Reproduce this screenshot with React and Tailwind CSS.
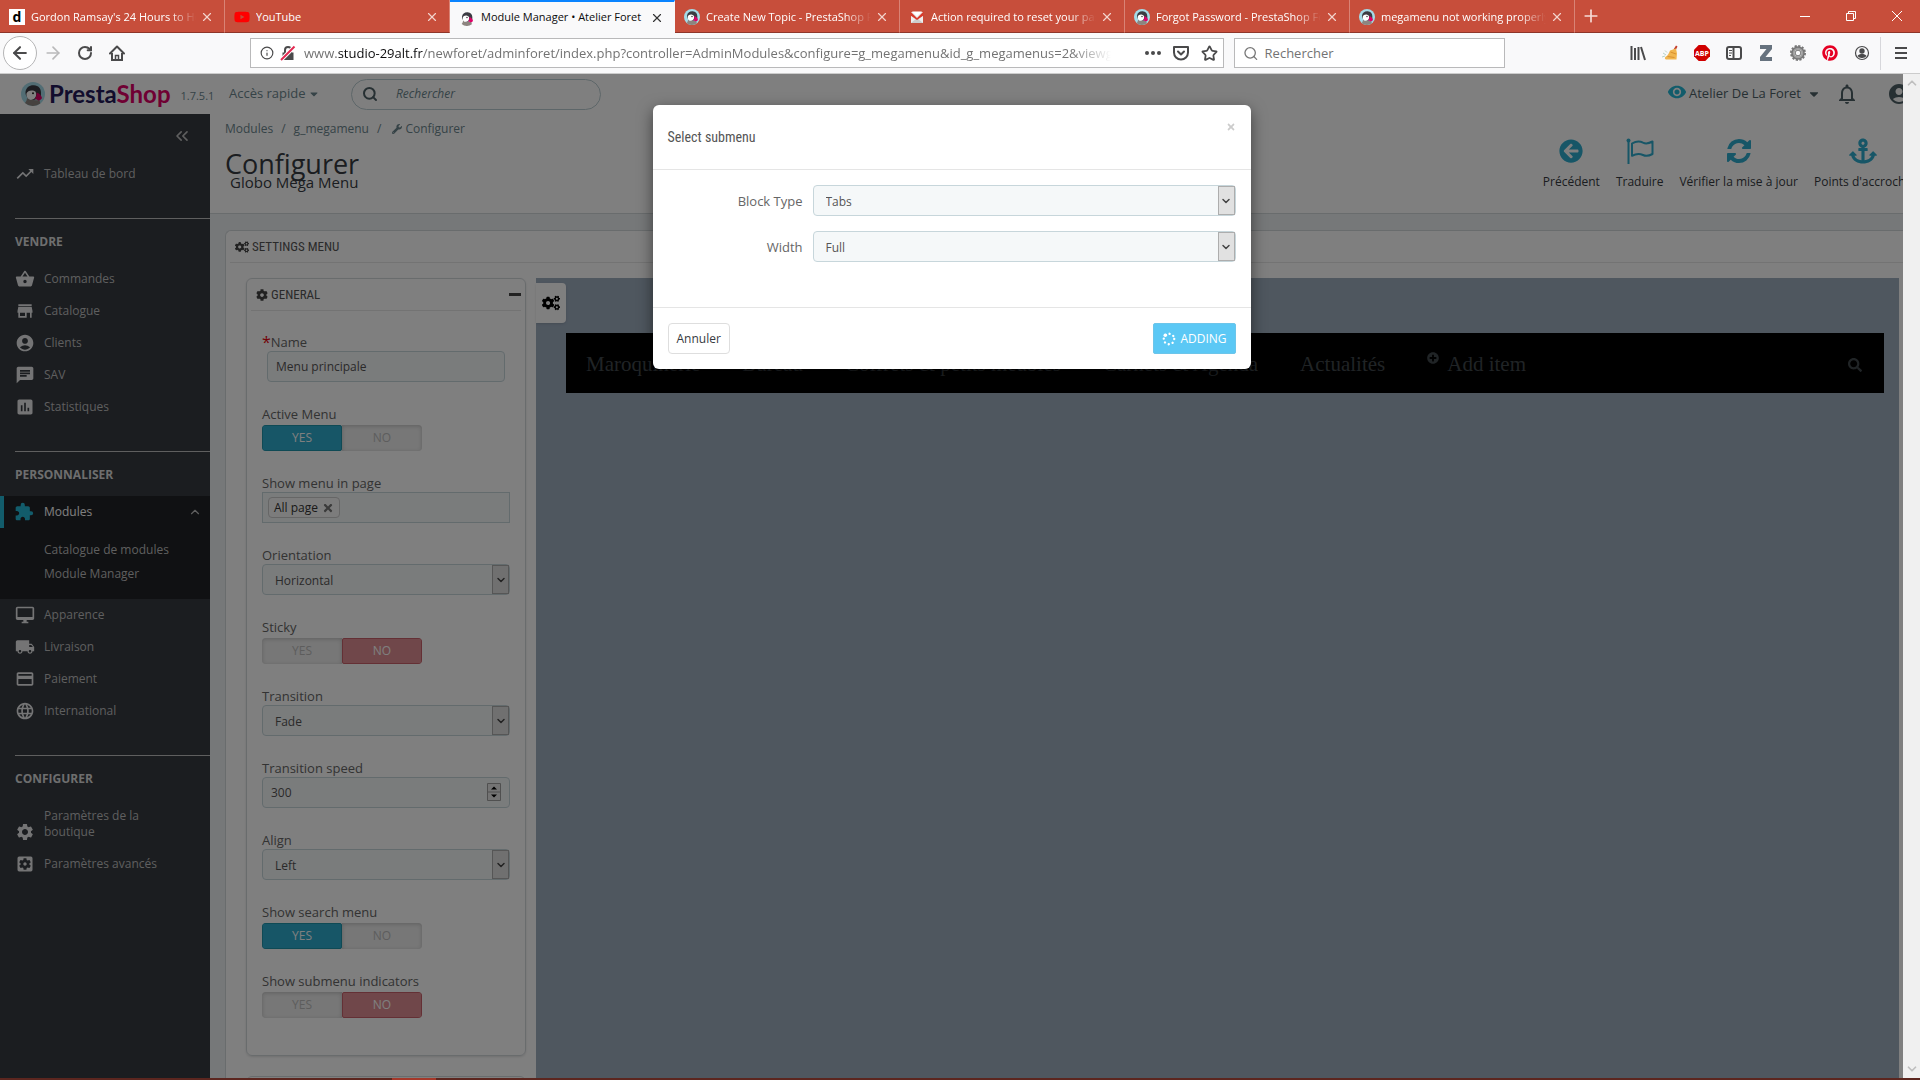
import React, { useState } from 'react';
import { ArrowLeft, ArrowRight, ChevronDown, ChevronUp, ChevronsLeft, Info, Plus, RotateCw, Search, Star, X } from 'lucide-react';
import { FaAnchor, FaArrowCircleLeft, FaCaretDown, FaCog, FaCogs, FaPinterest, FaPlusCircle, FaSearch, FaTimes, FaWrench, FaYoutube } from 'react-icons/fa';
import {
  MdAccountCircle,
  MdAssessment,
  MdChat,
  MdExtension,
  MdLanguage,
  MdLocalShipping,
  MdNotificationsNone,
  MdPayment,
  MdRemoveRedEye,
  MdSettings,
  MdSettingsApplications,
  MdShoppingBasket,
  MdStore,
  MdTrendingUp,
} from 'react-icons/md';

const TABS = [
  { title: "Gordon Ramsay's 24 Hours to Hell", icon: 'd', fade: true },
  { title: 'YouTube', icon: 'youtube' },
  { title: 'Module Manager • Atelier Foret', icon: 'puffin', active: true },
  { title: 'Create New Topic - PrestaShop Forums', icon: 'puffin', fade: true },
  { title: 'Action required to reset your password', icon: 'gmail', fade: true },
  { title: 'Forgot Password - PrestaShop Forums', icon: 'puffin', fade: true },
  { title: 'megamenu not working properly', icon: 'puffin', fade: true },
];

const ScreenIcon = ({ className }) => (
  <svg viewBox="0 0 24 24" className={className} fill="currentColor" fillRule="evenodd" aria-hidden="true">
    <path d="M21 2H3c-1.100 0-2 .9-2 2v12c0 1.100.9 2 2 2h7v2H8v2h8v-2h-2v-2h7c1.100 0 2-.9 2-2V4c0-1.100-.9-2-2-2zM3 4h18v10.500H3z" />
  </svg>
);

const SELL_LINKS = [
  { label: 'Commandes', Icon: MdShoppingBasket },
  { label: 'Catalogue', Icon: MdStore },
  { label: 'Clients', Icon: MdAccountCircle },
  { label: 'SAV', Icon: MdChat },
  { label: 'Statistiques', Icon: MdAssessment },
];

const IMPROVE_LINKS = [
  { label: 'Apparence', Icon: ScreenIcon },
  { label: 'Livraison', Icon: MdLocalShipping },
  { label: 'Paiement', Icon: MdPayment },
  { label: 'International', Icon: MdLanguage },
];

const MENU_ITEMS = ['Maroquinerie', 'Bureau', 'Coffrets & petits meubles', 'Carnets & Agenda', 'Actualités'];

const Puffin = ({ className, plain }) => (
  <svg viewBox="0 0 24 24" className={className} aria-hidden="true">
    {!plain && <circle cx="12" cy="12" r="12" fill="#a4dbe8" />}
    <path d="M4.500 10C5 5.500 8.500 3 13 3.300c4.500.2 7 3.200 7 7.200v4l-8 4-5.500-3c-1.500-1.500-2.200-3.500-2-5.500z" fill="#3b3b42" />
    <path d="M6 16c3 2 7 2.500 12.500 2l.8 3.500A12 12 0 0 1 4 20.900c1.200-1.400 2-3 2-4.900z" fill="#8d8580" />
    <path d="M5.500 11.500C6.500 9 9 8 12 8.500c2 .3 3.200 1.500 3.200 3.500 0 3.500-1.700 5.500-4.700 5.800-3 0-5.500-2.800-5-6.300z" fill="#fff" />
    <path d="M15.500 10.500c2.500.8 5 3 5.500 5.500-.8 1.500-2 2.400-3.500 2.500-1.200-.9-2.500-1.300-3.700-1.400 1.500-1.700 2-4.100 1.700-6.600z" fill="#df0067" />
    <circle cx="12" cy="11.200" r="1" fill="#222" />
  </svg>
);

const Favicon = ({ type, active }) => {
  if (type === 'd') {
    return <span className="flex h-4 w-4 shrink-0 items-center justify-center bg-white text-sm leading-4 font-bold text-black">d</span>;
  }
  if (type === 'youtube') return <FaYoutube className="h-4 w-4 shrink-0 text-[#f00]" />;
  if (type === 'gmail') {
    return (
      <svg viewBox="0 0 16 16" className="h-4 w-4 shrink-0" aria-hidden="true">
        <path d="M2 3h12v11H2z" fill="#eee" />
        <path d="M2 14l6-5 6 5z" fill="#ccc" />
        <path d="M1.500 2.500L8 9l6.500-6.500v4L8 11 1.500 6.500z" fill="#d93a2b" />
        <path d="M3 2.500h10L8 7z" fill="#fff" />
      </svg>
    );
  }
  return <Puffin className="h-4 w-4 shrink-0" plain={active} />;
};

const BrowserTab = ({ title, icon, active, fade }) => (
  <div
    className={`flex h-[33px] w-[225px] min-w-0 items-center border-r pl-[9px] pr-2.5 ${
      active
        ? 'border-t-2 border-t-[#0a84ff] border-r-transparent bg-[#f9f9fa] text-[#0c0c0d]'
        : 'border-b border-b-[#8e3529] border-r-[#d98375] pt-0.5 text-white'
    }`}
  >
    <Favicon type={icon} active={active} />
    <span
      className={`ml-1.5 min-w-0 flex-1 overflow-hidden whitespace-nowrap ${
        fade ? '[mask-image:linear-gradient(to_right,black_84%,transparent)]' : ''
      }`}
    >
      {title}
    </span>
    <button aria-label="Fermer l'onglet" className="ml-1">
      <X className={`h-3.5 w-3.5 ${active ? 'text-[#333]' : 'text-[#f3d3cd]'}`} strokeWidth={2} />
    </button>
  </div>
);

const TabStrip = () => (
  <div className="flex h-[33px] shrink-0 bg-[#c74e3b] text-[11px]">
    {TABS.map((tab) => (
      <BrowserTab key={tab.title} {...tab} />
    ))}
    <div className="flex flex-1 items-center border-b border-[#8e3529]">
      <button aria-label="Nouvel onglet" className="ml-1.5">
        <Plus className="h-5 w-5 text-[#f6dcd7]" strokeWidth={2} />
      </button>
      <div className="ml-auto flex text-white">
        <button aria-label="Réduire" className="flex w-[46px] justify-center">
          <svg viewBox="0 0 10 10" className="h-2.5 w-2.5"><path d="M0 5.500h10" stroke="currentColor" /></svg>
        </button>
        <button aria-label="Restaurer" className="flex w-[46px] justify-center">
          <svg viewBox="0 0 10 10" className="h-2.5 w-2.5" fill="none" stroke="currentColor">
            <path d="M.5 2.500h7v7h-7zM2.500 2.500v-2h7v7h-2" />
          </svg>
        </button>
        <button aria-label="Fermer" className="flex w-[46px] justify-center">
          <svg viewBox="0 0 10 10" className="h-2.5 w-2.5"><path d="M0 0l10 10M10 0L0 10" stroke="currentColor" /></svg>
        </button>
      </div>
    </div>
  </div>
);

const ToolbarIcon = ({ label, children }) => (
  <button aria-label={label} className="flex w-8 shrink-0 items-center justify-center">
    {children}
  </button>
);

const NavBar = () => (
  <div className="flex h-[41px] shrink-0 items-center border-b border-[#ccc] bg-[#f9f9fa] text-[#4a4a4b]">
    <div className="flex w-[250px] shrink-0 items-center pl-[3px]">
      <button aria-label="Page précédente" className="flex h-[34px] w-[34px] items-center justify-center rounded-full border border-[#b5b5b6] bg-white">
        <ArrowLeft className="h-5 w-5" strokeWidth={2.500} />
      </button>
      <ToolbarIcon label="Page suivante"><ArrowRight className="h-5 w-5 text-[#b9b9ba]" /></ToolbarIcon>
      <ToolbarIcon label="Actualiser"><RotateCw className="h-4 w-4" strokeWidth={3} /></ToolbarIcon>
      <ToolbarIcon label="Accueil">
        <svg viewBox="0 0 16 16" className="h-4 w-4" fill="none" stroke="currentColor" strokeWidth="2">
          <path d="M1 8.500L8 1.500l7 7" strokeLinecap="round" strokeLinejoin="round" />
          <path d="M3 8v7h10V8" />
          <path d="M6.500 15v-4.500h3V15" strokeWidth="1.500" />
        </svg>
      </ToolbarIcon>
    </div>
    <div className="flex h-[30px] min-w-0 flex-1 items-center border border-[#b9b9ba] bg-white pl-[9px]">
      <Info className="h-3.5 w-3.5 shrink-0" />
      <svg viewBox="0 0 16 16" className="ml-1.5 h-4 w-4 shrink-0" aria-hidden="true">
        <path d="M5 8V5a3 3 0 0 1 6 0v3" fill="none" stroke="#4a4a4b" strokeWidth="2" />
        <path d="M2.500 7.500h11V15h-11z" fill="#4a4a4b" />
        <path d="M1 15L14.500 1.500" stroke="#fff" strokeWidth="4" />
        <path d="M1 15L14.500 1.500" stroke="#e22850" strokeWidth="2" />
      </svg>
      <span className="ml-2 min-w-0 flex-1 overflow-hidden pt-px text-[13px] whitespace-nowrap text-[#737373] [mask-image:linear-gradient(to_right,black_95%,transparent)]">
        www.<span className="text-[#0c0c0d]">studio-29alt.fr</span>/newforet/adminforet/index.php?controller=AdminModules&amp;configure=g_megamenu&amp;id_g_megamenus=2&amp;viewg_megamenu
      </span>
      <div className="ml-7 flex items-center">
        <button aria-label="Actions" className="flex w-7 justify-center">
          <svg viewBox="0 0 16 4" className="w-4" fill="currentColor"><circle cx="2" cy="2" r="2" /><circle cx="8" cy="2" r="2" /><circle cx="14" cy="2" r="2" /></svg>
        </button>
        <button aria-label="Pocket" className="flex w-7 justify-center">
          <svg viewBox="0 0 16 16" className="h-4 w-4" fill="none" stroke="currentColor" strokeWidth="2" strokeLinecap="round" strokeLinejoin="round">
            <path d="M1 2h14v5.500a7 7 0 0 1-14 0z" />
            <path d="M5 6.500L8 9.500l3-3" />
          </svg>
        </button>
        <button aria-label="Marque-page" className="flex w-7 justify-center">
          <Star className="h-[17px] w-[17px]" strokeWidth={2.500} />
        </button>
      </div>
    </div>
    <label className="ml-2.5 flex h-[30px] w-[271px] shrink-0 items-center border border-[#b9b9ba] bg-white pl-2">
      <Search className="h-[17px] w-[17px] text-[#777]" />
      <input aria-label="Rechercher sur le Web" placeholder="Rechercher" className="ml-1.5 w-full pt-px text-[13px] outline-none placeholder:text-[#737373]" />
    </label>
    <div className="ml-[117px] flex shrink-0 items-center">
      <ToolbarIcon label="Bibliothèque">
        <svg viewBox="0 0 16 16" className="h-4 w-4" stroke="currentColor" strokeWidth="2"><path d="M1.500 1v14M5 3v12M8.500 2v13M11 2l4 13" /></svg>
      </ToolbarIcon>
      <ToolbarIcon label="Nettoyer">
        <svg viewBox="0 0 16 16" className="h-4 w-4">
          <path d="M14 .5l1.500 1-2 4-2-1z" fill="#c33c2b" />
          <path d="M8 5.500l6-2 1 5-.5 6H4c-1.500-.5-1.500-2 0-3C6 10.500 7 8 8 5.500z" fill="#f1b64f" />
          <path d="M5.500 11.500l7 1M8.500 7l5.500 2" stroke="#d9902f" />
          <path d="M1 8l3 2M0 12l3-1M3 5.500l2 2" stroke="#b5d3c8" />
        </svg>
      </ToolbarIcon>
      <ToolbarIcon label="Adblock Plus">
        <svg viewBox="0 0 16 16" className="h-4 w-4">
          <path d="M4.700 0h6.600L16 4.700v6.600L11.300 16H4.700L0 11.300V4.700z" fill="#d00000" />
          <text x="8" y="10.500" fontSize="7" fontWeight="700" textAnchor="middle" fill="#fff">ABP</text>
        </svg>
      </ToolbarIcon>
      <ToolbarIcon label="Panneaux latéraux">
        <svg viewBox="0 0 16 16" className="h-4 w-4" fill="none" stroke="currentColor" strokeWidth="2">
          <rect x="1" y="2" width="14" height="12" rx="2" />
          <path d="M7.500 2v12" />
          <path d="M3 5.500h3M3 8h3M3 10.500h2" strokeWidth="1" />
        </svg>
      </ToolbarIcon>
      <ToolbarIcon label="Zotero">
        <svg viewBox="0 0 16 16" className="h-4 w-4"><path d="M2 0h12v4L7.500 12H14v4H2v-4l6.500-8H2z" fill="#66727e" /></svg>
      </ToolbarIcon>
      <ToolbarIcon label="Réglages">
        <svg viewBox="0 0 16 16" className="h-4 w-4" fill="none">
          <circle cx="8" cy="8" r="7" stroke="#777" strokeWidth="2" strokeDasharray="2.200 1.465" />
          <circle cx="8" cy="8" r="4.800" stroke="#a0a0a0" strokeWidth="3" />
          <circle cx="8" cy="8" r="6" stroke="#777" strokeWidth="1.500" />
          <circle cx="8" cy="8" r="2.800" stroke="#777" />
        </svg>
      </ToolbarIcon>
      <ToolbarIcon label="Pinterest"><FaPinterest className="h-4 w-4 text-[#e60023]" /></ToolbarIcon>
      <ToolbarIcon label="Compte">
        <svg viewBox="0 0 16 16" className="h-4 w-4" fill="currentColor">
          <circle cx="8" cy="8" r="6.500" fill="none" stroke="currentColor" strokeWidth="1.200" />
          <circle cx="8" cy="6" r="2.700" />
          <path d="M3.500 11c1-1.600 2.500-2 4.500-2s3.500.4 4.500 2A5.500 5.500 0 0 1 8 13a5.500 5.500 0 0 1-4.500-2z" />
        </svg>
      </ToolbarIcon>
      <span className="ml-0.5 h-[33px] w-px bg-[#d7d7db]" />
      <button aria-label="Menu" className="flex w-[39px] justify-center">
        <svg viewBox="0 0 14 14" className="h-3.5 w-3.5" stroke="currentColor" strokeWidth="2"><path d="M1 2h12M1 7h12M1 12h12" /></svg>
      </button>
    </div>
  </div>
);

const ShopHeader = () => (
  <header className="flex h-10 shrink-0 items-center bg-white text-[13px] text-[#6c868e]">
    <a href="#" className="flex w-[229px] shrink-0 items-center pl-[21px]">
      <Puffin className="h-6 w-6" />
      <span className="ml-1 font-[Lato] text-2xl leading-6 font-bold text-[#251b5b]">
        Presta<span className="text-[#df0067]">Shop</span>
      </span>
      <span className="mt-1 ml-2.5 text-[11px]">1.7.5.1</span>
    </a>
    <button className="flex w-[122px] items-center">
      Accès rapide <FaCaretDown className="ml-0.5 h-3 w-3" />
    </button>
    <label className="flex h-[31px] w-[250px] items-center rounded-full border border-[#bbcdd2] pl-2.5">
      <Search className="h-4 w-4 text-[#4e6167]" strokeWidth={3} />
      <input aria-label="Rechercher" placeholder="Rechercher" className="ml-[18px] w-40 text-xs italic outline-none placeholder:text-[#6c868e]" />
    </label>
    <div className="-mr-2 ml-auto flex shrink-0 items-center text-[#4e6167]">
      <MdRemoveRedEye className="mb-1 h-5 w-5 text-[#25b9d7]" />
      <button className="ml-0.5 flex items-center">
        Atelier De La Foret <FaCaretDown className="ml-1.5 h-3.5 w-3.5" />
      </button>
      <MdNotificationsNone className="ml-3.5 h-6 w-6" />
      <MdAccountCircle className="ml-7 h-6 w-6" />
    </div>
  </header>
);

const NavLink = ({ label, Icon }) => (
  <a href="#" className="flex min-h-8 items-end py-2 pl-[15px] leading-4">
    <Icon className="-my-0.5 h-5 w-5 shrink-0 text-[#e9e9ea]" />
    <span className="ml-[9px] w-[120px]">{label}</span>
  </a>
);

const NavTitle = ({ children }) => (
  <div className="mt-7 ml-[15px] border-t border-[#bebebe] pt-3.5 pb-3 font-bold leading-[18px] text-[#dcdcdd]">{children}</div>
);

const Sidebar = () => (
  <nav className="w-[210px] shrink-0 bg-[#363a41] text-xs text-[#bebebe]">
    <div className="flex h-11 items-center justify-end pr-[18px]">
      <button aria-label="Réduire le menu"><ChevronsLeft className="h-5 w-5" /></button>
    </div>
    <NavLink label="Tableau de bord" Icon={MdTrendingUp} />
    <NavTitle>VENDRE</NavTitle>
    {SELL_LINKS.map((link) => (
      <NavLink key={link.label} {...link} />
    ))}
    <NavTitle>PERSONNALISER</NavTitle>
    <div className="bg-[#202226] pb-[13px]">
      <a href="#" className="flex h-8 items-center border-l-4 border-[#25b9d7] pl-2.5 text-white">
        <MdExtension className="h-5 w-5 text-[#25b9d7]" />
        <span className="ml-2.5">Modules</span>
        <ChevronUp className="mr-2 ml-auto h-3.5 w-3.5 text-[#bebebe]" />
      </a>
      <div className="flex flex-col pt-2.5 pl-11 leading-6">
        <a href="#">Catalogue de modules</a>
        <a href="#">Module Manager</a>
      </div>
    </div>
    {IMPROVE_LINKS.map((link) => (
      <NavLink key={link.label} {...link} />
    ))}
    <NavTitle>CONFIGURER</NavTitle>
    <NavLink label="Paramètres de la boutique" Icon={MdSettings} />
    <NavLink label="Paramètres avancés" Icon={MdSettingsApplications} />
  </nav>
);

const FlagIcon = () => (
  <svg viewBox="0 0 28 28" className="h-7 w-7" fill="none" stroke="currentColor" strokeWidth="2">
    <circle cx="2.500" cy="3.500" r="2" fill="currentColor" stroke="none" />
    <path d="M2.500 3v24" />
    <path d="M6 6.500c5-3 8-2.500 11-.8 3 1.500 5.500 1 9.500-1.200v12.500c-4 2.200-6.500 2.500-9.500 1s-6-2-11 .8z" strokeLinejoin="round" />
  </svg>
);

const RefreshIcon = () => (
  <svg viewBox="0 0 1536 1792" className="h-7 w-6" fill="currentColor">
    <path d="M1511 1056q0 5-1 7-64 268-268 434.500t-478 166.500q-146 0-282.500-55t-243.500-157l-129 129q-19 19-45 19t-45-19-19-45v-448q0-26 19-45t45-19h448q26 0 45 19t19 45-19 45l-137 137q71 66 161 102t187 36q134 0 250-65t186-179q11-17 53-117 8-23 30-23h192q13 0 22.500 9.500t9.500 22.500zm25-800v448q0 26-19 45t-45 19h-448q-26 0-45-19t-19-45 19-45l138-138q-148-137-349-137-134 0-250 65t-186 179q-11 17-53 117-8 23-30 23h-199q-13 0-22.500-9.500t-9.500-22.500v-7q65-268 270-434.500t480-166.500q146 0 284 55.500t245 156.500l130-129q19-19 45-19t45 19 19 45z" />
  </svg>
);

const PageAction = ({ label, children }) => (
  <a href="#" className="flex flex-col items-center px-2 text-xs leading-[18px] whitespace-nowrap text-[#363a41]">
    <span className="mb-1 flex h-9 items-center text-[#2eacce]">{children}</span>
    {label}
  </a>
);

const PageHead = () => (
  <div className="flex h-[100px] shrink-0 border-b border-[#d3d8db] bg-white pl-[15px] text-[#363a41]">
    <div className="pt-1.5">
      <div className="flex items-center text-xs leading-[18px] text-[#6c868e]">
        <a href="#">Modules</a>
        <span className="mx-2">/</span>
        <a href="#">g_megamenu</a>
        <span className="mx-2">/</span>
        <FaWrench className="mx-[3px] h-2.5 w-2.5" />
        Configurer
      </div>
      <h1 className="mt-2 text-[27px] leading-9">Configurer</h1>
      <h4 className="-mt-2.5 ml-[5px] text-[15px] leading-5">Globo Mega Menu</h4>
    </div>
    <div className="-mr-[17px] ml-auto flex shrink-0 pt-[19px]">
      <PageAction label="Précédent"><FaArrowCircleLeft className="h-6 w-6" /></PageAction>
      <PageAction label="Traduire"><FlagIcon /></PageAction>
      <PageAction label="Vérifier la mise à jour"><RefreshIcon /></PageAction>
      <PageAction label="Points d'accroche"><FaAnchor className="h-7 w-7" /></PageAction>
    </div>
  </div>
);

const Select = ({ id, options }) => (
  <div className="relative">
    <select id={id} className="h-[31px] w-full appearance-none rounded-sm border border-[#c7d6db] bg-[#f5f8f9] pt-0.5 pl-3 text-xs text-[#555]">
      {options.map((option) => (
        <option key={option}>{option}</option>
      ))}
    </select>
    <span className="pointer-events-none absolute top-px right-px flex h-[29px] w-[17px] items-center justify-center border border-[#adadad] bg-[#e1e1e1] text-[#444]">
      <ChevronDown className="h-3 w-3" strokeWidth={3} />
    </span>
  </div>
);

const Switch = ({ id, defaultOn }) => {
  const [on, setOn] = useState(defaultOn);
  const off = 'text-[#bbb] bg-[#eee] shadow-[inset_0_1px_4px_rgba(0,0,0,0.2)]';

  return (
    <div className="mt-0.5 flex h-[26px] w-40 overflow-hidden rounded-sm bg-[#eee] text-xs">
      <button id={id} onClick={() => setOn(true)} className={`w-1/2 ${on ? 'rounded-xs border border-[#1e94ab] bg-[#2eacce] text-white' : off}`}>
        YES
      </button>
      <button onClick={() => setOn(false)} className={`w-1/2 ${on ? off : 'rounded-xs border border-[#c9606a] bg-[#e08f95] text-white'}`}>
        NO
      </button>
    </div>
  );
};

const Field = ({ id, label, required, children }) => (
  <div className="mb-[23px]">
    <label htmlFor={id} className="flex h-[18px] text-[13px] leading-[18px] text-[#666]">
      {required && <span className="text-base leading-[18px] text-red-600">*</span>}
      {label}
    </label>
    {children}
  </div>
);

const GeneralCard = () => (
  <section className="rounded-md border border-[#d3d8db] px-1 shadow-sm">
    <h3 className="flex h-8 items-center border-b border-[#e6e6e6] pl-[5px] font-['Ubuntu_Condensed','Roboto_Condensed','Liberation_Sans_Narrow','Open_Sans',sans-serif] text-[13px] text-[#555]">
      <FaCog className="mr-[3px] h-3 w-3 text-[#444]" />
      GENERAL
      <button aria-label="Replier" className="ml-auto h-[3px] w-3 bg-[#444]" />
    </h3>
    <div className="px-[11px] pt-[22px] pb-3.5">
      <Field id="name" label="Name" required>
        <input id="name" defaultValue="Menu principale" className="mx-[5px] block h-[31px] w-[238px] rounded-sm border border-[#c7d6db] bg-[#f5f8f9] px-2 text-xs text-[#555]" />
      </Field>
      <Field id="active" label="Active Menu"><Switch id="active" defaultOn /></Field>
      <Field id="pages" label="Show menu in page">
        <div className="flex h-[31px] items-center border border-[#c7d6db] bg-[#f5f8f9] pl-[5px]">
          <button id="pages" className="flex h-[21px] items-center rounded-sm border border-[#ccc] bg-[#f8f8f8] px-[5px] text-xs text-[#333]">
            All page <FaTimes className="ml-1 h-3 w-3 text-[#777]" />
          </button>
        </div>
      </Field>
      <Field id="orientation" label="Orientation"><Select id="orientation" options={['Horizontal', 'Vertical']} /></Field>
      <Field id="sticky" label="Sticky"><Switch id="sticky" defaultOn={false} /></Field>
      <Field id="transition" label="Transition"><Select id="transition" options={['Fade', 'Slide']} /></Field>
      <Field id="speed" label="Transition speed">
        <div className="relative">
          <input
            id="speed"
            type="number"
            defaultValue="300"
            className="h-[31px] w-full rounded-sm border border-[#c7d6db] bg-[#f5f8f9] px-2 text-xs text-[#555] [appearance:textfield] [&::-webkit-inner-spin-button]:appearance-none"
          />
          <svg viewBox="0 0 14 18" className="pointer-events-none absolute top-1.5 right-[9px] h-[18px] w-3.5">
            <path d="M.5 .5h13v17H.5zM.5 9h13" fill="#e8e8e8" stroke="#a0a0a0" />
            <path d="M4 6.500h6L7 3.500zM4 11.500h6l-3 3z" fill="#000" />
          </svg>
        </div>
      </Field>
      <Field id="align" label="Align"><Select id="align" options={['Left', 'Center', 'Right']} /></Field>
      <Field id="search" label="Show search menu"><Switch id="search" defaultOn /></Field>
      <Field id="indicators" label="Show submenu indicators"><Switch id="indicators" defaultOn={false} /></Field>
    </div>
  </section>
);

const Preview = () => (
  <div className="mr-1 flex min-w-0 flex-1 items-start bg-[#9eaebf]">
    <button aria-label="Réglages du menu" className="mt-[5px] flex h-10 w-[30px] shrink-0 items-center justify-center rounded-r bg-white text-black shadow">
      <FaCogs className="h-[18px] w-[18px]" />
    </button>
    <div className="mt-[55px] mr-[15px] flex h-[60px] min-w-0 flex-1 items-center gap-[42px] bg-black pt-[3px] pr-[22px] pl-5 font-['Liberation_Serif',serif] text-[21px] whitespace-nowrap text-[#41484d]">
      {MENU_ITEMS.map((item) => (
        <a key={item} href="#">{item}</a>
      ))}
      <a href="#" className="flex items-center">
        <FaPlusCircle className="mr-2 mb-3.5 h-3 w-3" />
        Add item
      </a>
      <button aria-label="Rechercher" className="ml-auto"><FaSearch className="h-3.5 w-3.5" /></button>
    </div>
  </div>
);

const SettingsPanel = () => (
  <div className="flex min-h-0 flex-1 flex-col bg-[#edf0f3] pt-4 pl-[15px]">
    <div className="flex min-h-0 flex-1 flex-col rounded-tl-md border-t border-l border-[#d3d8db] bg-white">
      <h3 className="ml-1 flex h-8 shrink-0 items-center border-b border-[#e6e6e6] pl-[5px] font-['Ubuntu_Condensed','Roboto_Condensed','Liberation_Sans_Narrow','Open_Sans',sans-serif] text-[13px] text-[#555]">
        <FaCogs className="mr-[3px] h-3.5 w-3.5 text-[#444]" />
        SETTINGS MENU
      </h3>
      <div className="flex min-h-0 flex-1 pt-[15px]">
        <div className="mr-2.5 ml-5 w-[280px] shrink-0">
          <GeneralCard />
          <section className="mt-5 h-10 rounded-md border border-[#d3d8db]" />
        </div>
        <Preview />
      </div>
    </div>
  </div>
);

const Spinner = () => (
  <svg viewBox="0 0 24 24" className="mr-1 h-3.5 w-3.5" fill="none" stroke="currentColor" strokeWidth="4" strokeLinecap="round">
    <circle cx="12" cy="12" r="9" strokeDasharray="0.100 6.970" />
    <path d="M5.600 5.600h.1" strokeWidth="6" />
  </svg>
);

const SubmenuModal = () => (
  <div role="dialog" aria-label="Select submenu" className="h-fit w-[598px] rounded-md bg-white shadow-[0_5px_15px_rgba(0,0,0,0.5)]">
    <div className="flex h-[65px] justify-between border-b border-[#e5e5e5] px-[15px]">
      <h4 className="self-center font-['Ubuntu_Condensed','Roboto_Condensed','Liberation_Sans_Narrow','Open_Sans',sans-serif] text-sm text-[#555]">Select submenu</h4>
      <button aria-label="Fermer" className="mt-4 flex h-3 items-center"><FaTimes className="h-2.5 w-2.5 text-[#ccc]" /></button>
    </div>
    <div className="flex flex-col gap-[15px] px-[15px] pt-[15px] pb-[45px] text-[13px] text-[#666]">
      <div className="flex items-center">
        <label htmlFor="block-type" className="w-[135px] pt-0.5 text-right">Block Type</label>
        <div className="ml-2.5 flex-1"><Select id="block-type" options={['Tabs', 'Columns']} /></div>
      </div>
      <div className="flex items-center">
        <label htmlFor="block-width" className="w-[135px] pt-0.5 text-right">Width</label>
        <div className="ml-2.5 flex-1"><Select id="block-width" options={['Full', 'Auto']} /></div>
      </div>
    </div>
    <div className="flex justify-between border-t border-[#e5e5e5] p-[15px] text-xs">
      <button className="h-[31px] rounded-sm border border-[#dedede] px-2 text-[#363a41]">Annuler</button>
      <button className="flex h-[31px] items-center rounded-xs border border-[#6cc5ea] bg-[#5bc8f5] px-2 text-white">
        <Spinner />
        ADDING
      </button>
    </div>
  </div>
);

const App = () => (
  <div className="flex h-screen flex-col overflow-hidden bg-white font-['Open_Sans',sans-serif]">
    <TabStrip />
    <NavBar />
    <div className="flex min-h-0 flex-1">
      <div className="relative flex min-w-0 flex-1 flex-col overflow-hidden">
        <ShopHeader />
        <div className="flex min-h-0 flex-1">
          <Sidebar />
          <main className="flex min-w-0 flex-1 flex-col overflow-hidden">
            <PageHead />
            <SettingsPanel />
          </main>
        </div>
        <div className="absolute inset-0 flex justify-center bg-black/50 pt-[31px]">
          <SubmenuModal />
        </div>
      </div>
      <div className="flex w-[17px] shrink-0 flex-col items-center justify-between bg-[#f0f0f0] py-0.5 text-[#bfbfbf]">
        <ChevronUp className="h-3.5 w-3.5" strokeWidth={3} />
        <ChevronDown className="h-3.5 w-3.5" strokeWidth={3} />
      </div>
    </div>
    <div className="flex h-0.5 shrink-0 bg-[#5c261f]">
      <span className="ml-[392px] w-11 bg-[#a5382a]" />
    </div>
  </div>
);

export default App;
